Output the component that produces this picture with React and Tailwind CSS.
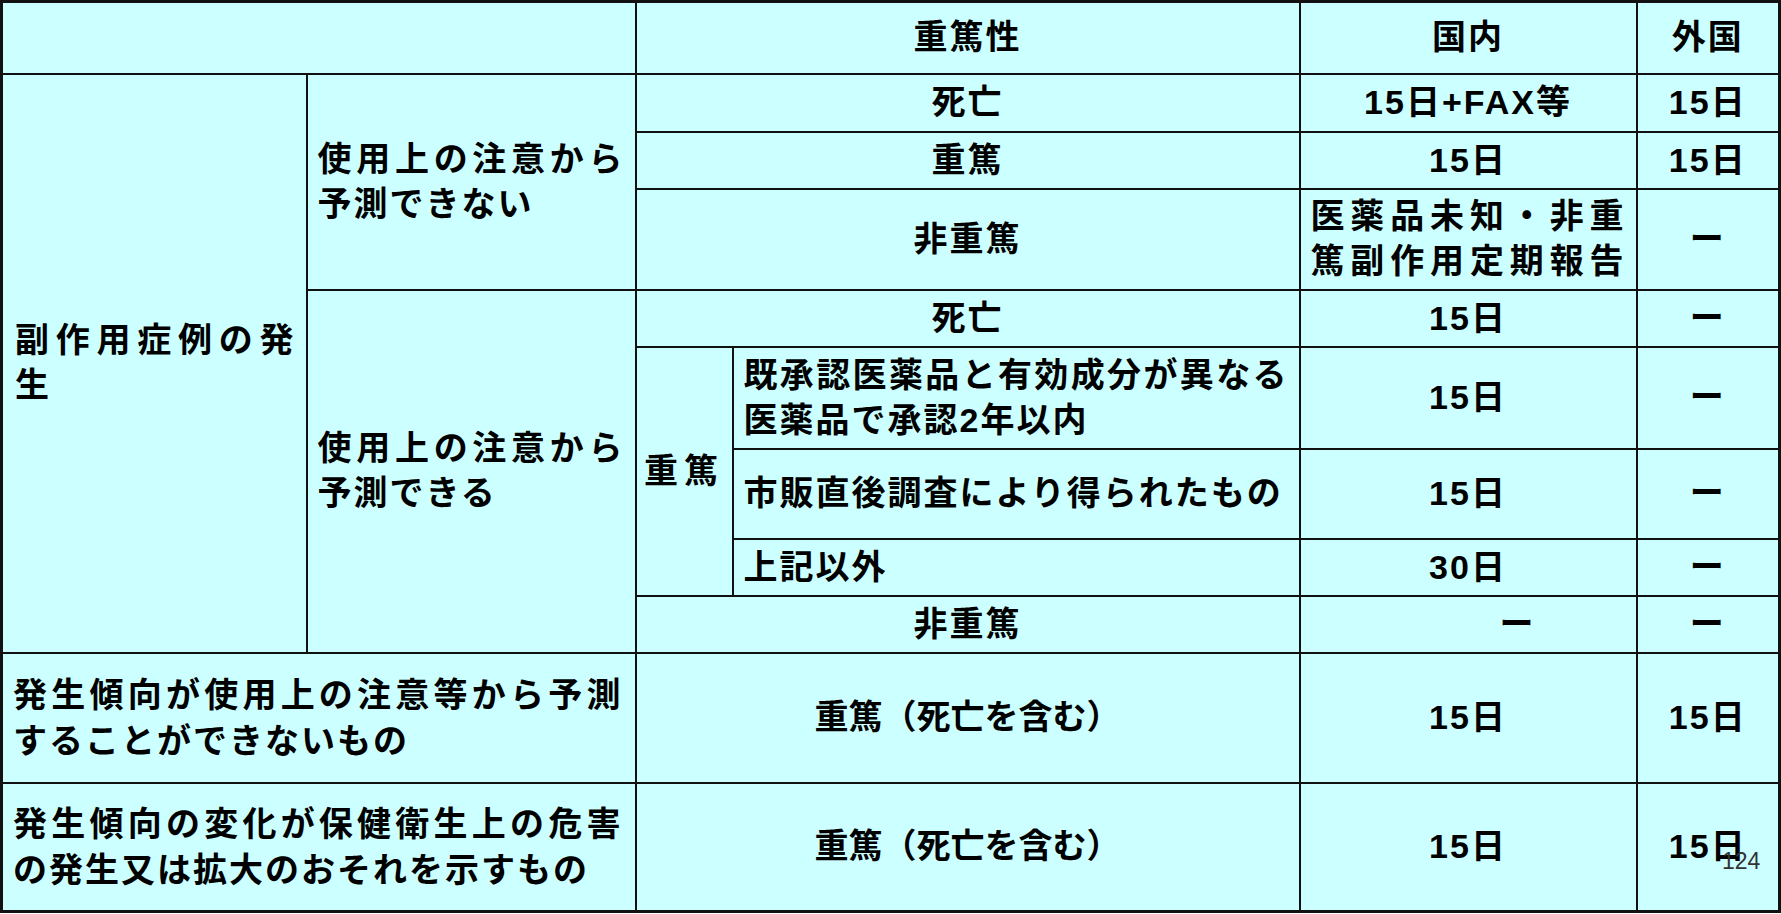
export default function App() {
  const cell = "border-2 border-[#111] align-middle";
  const center = `${cell} text-center`;
  const left = `${cell} text-justify pl-[10px] pr-[10px] leading-[45px]`;

  return (
    <div className="relative w-[1781px] h-[914px] bg-white text-black font-bold text-[34px] tracking-[2px] [font-family:'Liberation_Sans','Noto_Sans_CJK_JP',sans-serif]">
      <table className="table-fixed border-collapse w-[1778px] bg-[#ccffff] border-[3px] border-[#111]">
        <colgroup>
          <col className="w-[305px]" />
          <col className="w-[329px]" />
          <col className="w-[97px]" />
          <col className="w-[567px]" />
          <col className="w-[337px]" />
          <col className="w-[143px]" />
        </colgroup>
        <tbody>
          {/* Header */}
          <tr className="h-[72px]">
            <td colSpan={2} className={center}></td>
            <td colSpan={2} className={center}>重篤性</td>
            <td className={center}>国内</td>
            <td className={center}>外国</td>
          </tr>

          {/* 予測できない */}
          <tr className="h-[58px]">
            <td rowSpan={8} className={`${left} pl-[12px] leading-[42px]`}>
              副作用症例の発生
            </td>
            <td rowSpan={3} className={left}>
              使用上の注意から予測できない
            </td>
            <td colSpan={2} className={center}>死亡</td>
            <td className={center}>15日+FAX等</td>
            <td className={center}>15日</td>
          </tr>
          <tr className="h-[57px]">
            <td colSpan={2} className={center}>重篤</td>
            <td className={center}>15日</td>
            <td className={center}>15日</td>
          </tr>
          <tr className="h-[101px]">
            <td colSpan={2} className={center}>非重篤</td>
            <td className={`${cell} px-[10px] leading-[45px] text-justify [text-align-last:justify]`}>
              医薬品未知・非重篤副作用定期報告
            </td>
            <td className={center}>ー</td>
          </tr>

          {/* 予測できる */}
          <tr className="h-[57px]">
            <td rowSpan={5} className={left}>
              使用上の注意から予測できる
            </td>
            <td colSpan={2} className={center}>死亡</td>
            <td className={center}>15日</td>
            <td className={center}>ー</td>
          </tr>
          <tr className="h-[102px]">
            <td rowSpan={3} className={`${center} tracking-[6px]`}>重篤</td>
            <td className={`${left} pr-[8px]`}>
              既承認医薬品と有効成分が異なる医薬品で承認2年以内
            </td>
            <td className={center}>15日</td>
            <td className={center}>ー</td>
          </tr>
          <tr className="h-[90px]">
            <td className={`${left} pr-[8px]`}>市販直後調査により得られたもの</td>
            <td className={center}>15日</td>
            <td className={center}>ー</td>
          </tr>
          <tr className="h-[57px]">
            <td className={`${left} pr-[8px]`}>上記以外</td>
            <td className={center}>30日</td>
            <td className={center}>ー</td>
          </tr>
          <tr className="h-[57px]">
            <td colSpan={2} className={center}>非重篤</td>
            <td className={`${cell} text-right pr-[100px]`}>ー</td>
            <td className={center}>ー</td>
          </tr>

          {/* 発生傾向 */}
          <tr className="h-[130px]">
            <td colSpan={2} className={`${left} pr-[12px] leading-[46px]`}>
              発生傾向が使用上の注意等から予測することができないもの
            </td>
            <td colSpan={2} className={`${center} tracking-normal`}>重篤（死亡を含む）</td>
            <td className={center}>15日</td>
            <td className={center}>15日</td>
          </tr>
          <tr className="h-[129px]">
            <td colSpan={2} className={`${left} pr-[12px] leading-[46px]`}>
              発生傾向の変化が保健衛生上の危害の発生又は拡大のおそれを示すもの
            </td>
            <td colSpan={2} className={`${center} tracking-normal`}>重篤（死亡を含む）</td>
            <td className={center}>15日</td>
            <td className={center}>15日</td>
          </tr>
        </tbody>
      </table>

      {/* page number */}
      <span className="absolute left-[1722px] top-[850px] text-[23px] leading-none font-normal tracking-normal text-[#333]">
        124
      </span>
    </div>
  );
}
